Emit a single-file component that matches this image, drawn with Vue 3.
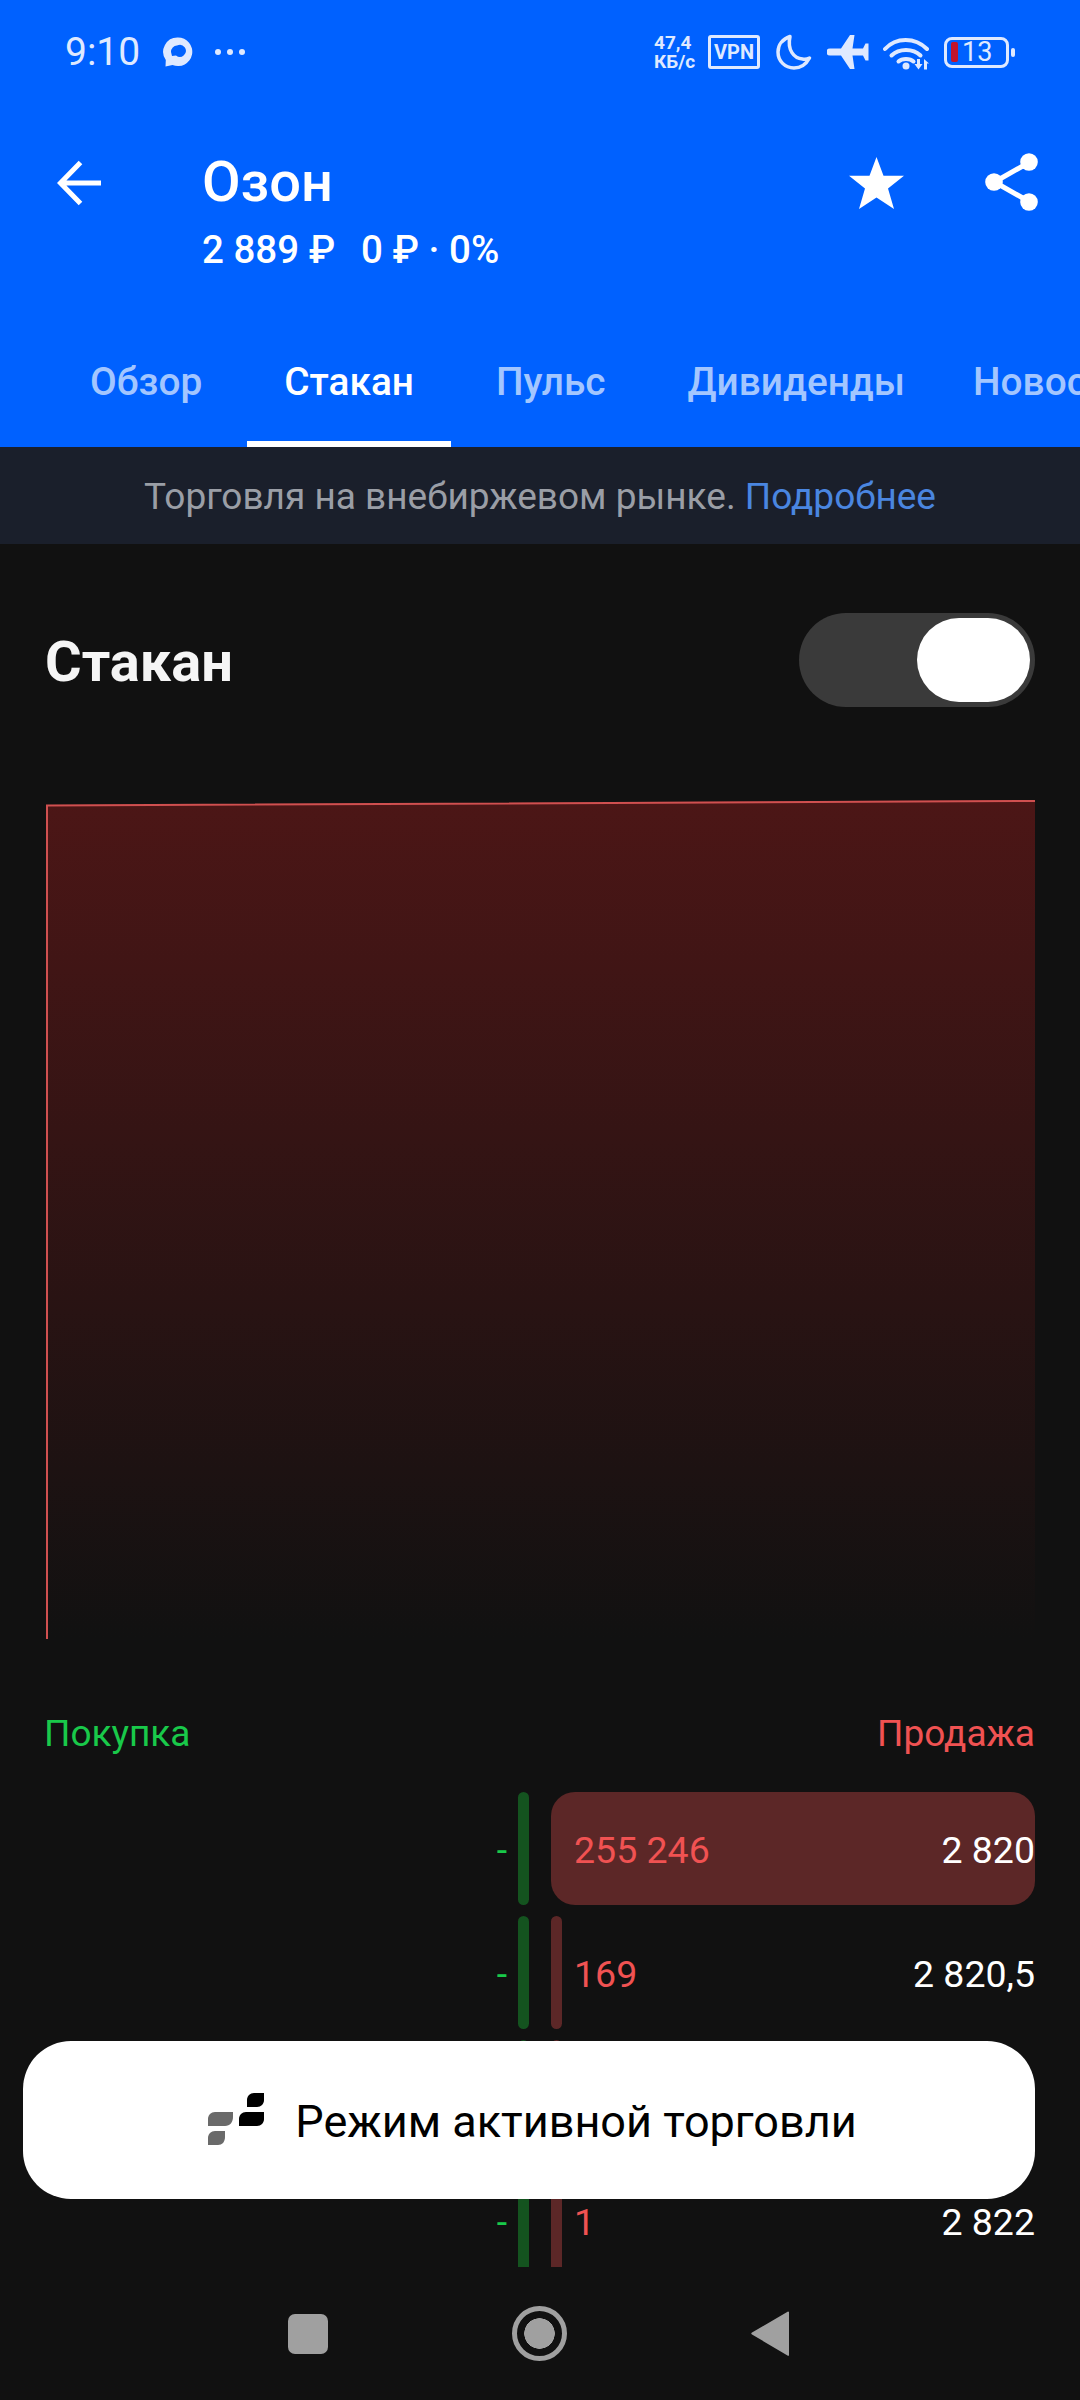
<template>
  <div class="screen">
    <div class="top">
      <div class="status">
        <span class="time">9:10</span>
        <svg class="bubble" width="30" height="30" viewBox="0 0 30 30">
          <path d="M15 0.5a14.300 14.300 0 1 1-5.500 27.500l-7 1.500 .3-6.500A14.300 14.300 0 0 1 15 0.5zM14 8.500a6.500 6.500 0 0 0-6 6.500l1 4 4-.5a6 6 0 1 0 1-10z" fill="#dfe9ff" fill-rule="evenodd" />
        </svg>
        <svg class="dots" width="32" height="8" viewBox="0 0 32 8">
          <circle cx="4" cy="4" r="3" fill="#dfe9ff" />
          <circle cx="16" cy="4" r="3" fill="#dfe9ff" />
          <circle cx="28" cy="4" r="3" fill="#dfe9ff" />
        </svg>
        <div class="status__right">
          <div class="speed">47,4<br />КБ/с</div>
          <div class="vpn">VPN</div>
          <svg class="moon" width="36" height="36" viewBox="0 0 36 36">
            <path d="M14 2.500C6.500 5 2 11 2 18c0 9 7 16 16 16 7 0 12-3.500 15.500-10-2 1-4.500 1.500-7 1C18 24.500 11 16 14 2.500z" fill="none" stroke="#dfe9ff" stroke-width="3.500" stroke-linejoin="round" />
          </svg>
          <svg class="plane" width="42" height="36" viewBox="0 0 42 36">
            <path d="M3 14.500H14L23 1H27.500L25.500 14.500H36L38.500 9.500H41.500V26.500H38.500L36 21.500H25.500L27.500 35H23L14 21.500H3A3.500 3.500 0 0 1 3 14.500z" fill="#dfe9ff" />
          </svg>
          <svg class="wifi" width="47" height="35" viewBox="0 0 47 35">
            <g fill="none" stroke="#dfe9ff" stroke-width="4" stroke-linecap="round">
              <path d="M2 14C13 2 32 2 44 14" />
              <path d="M8.500 20.500C16 13 30 13 37.500 20.500" />
              <path d="M15.500 26.500C19 23 27 23 30.500 26.500" />
            </g>
            <circle cx="23" cy="31" r="3.500" fill="#dfe9ff" />
            <path d="M34 24H37V29H39.500L35.500 34.500 31.500 29H34zM41 34.500V24L46 28.500H44V34.500z" fill="#dfe9ff" />
          </svg>
          <div class="battery">
            <div class="battery__body">
              <i class="battery__level"></i>
              <span>13</span>
            </div>
            <i class="battery__nub"></i>
          </div>
        </div>
      </div>

      <div class="head">
        <svg class="back" width="46" height="46" viewBox="0 0 46 46">
          <path d="M44 23H4M23.500 2.500L3.500 23l20 20.500" fill="none" stroke="#fff" stroke-width="5" />
        </svg>
        <div class="head__title">
          <h1>Озон</h1>
          <p>2 889 ₽<span class="change">0 ₽ · 0%</span></p>
        </div>
        <svg class="star" width="55" height="52" viewBox="0 0 55 52">
          <path d="M27.500 0L34.500 18.800H55L39 31.500 45 52 27.500 40.500 10 52 16 31.500 0 18.800H20.500z" fill="#fff" />
        </svg>
        <svg class="share" width="54" height="58" viewBox="0 0 54 58">
          <path d="M44 9.500L9.500 29l34.500 19.500" fill="none" stroke="#fff" stroke-width="5" />
          <circle cx="44" cy="9" r="8.800" fill="#fff" />
          <circle cx="9" cy="29" r="8.800" fill="#fff" />
          <circle cx="44" cy="49" r="8.800" fill="#fff" />
        </svg>
      </div>

      <div class="tabs">
        <div v-for="tab in tabs" :key="tab" class="tab" :class="{ active: tab === 'Стакан' }">{{ tab }}</div>
      </div>
    </div>

    <div class="notice">Торговля на внебиржевом рынке. <a>Подробнее</a></div>

    <div class="book">
      <div class="book__head">
        <h2>Стакан</h2>
        <div class="toggle"><i></i></div>
      </div>

      <svg class="chart" width="989" height="839" viewBox="0 0 989 839">
        <defs>
          <linearGradient id="depth" x1="0" y1="0" x2="0" y2="1">
            <stop offset="0" stop-color="#4c1616" />
            <stop offset="1" stop-color="#111111" />
          </linearGradient>
        </defs>
        <path d="M0 5L989 0V839H0z" fill="url(#depth)" />
        <path d="M1 839V5.500L989 1" fill="none" stroke="#d05050" stroke-width="2" />
      </svg>

      <div class="sides">
        <span class="buy-label">Покупка</span>
        <span class="sell-label">Продажа</span>
      </div>

      <div class="rows">
        <div v-for="(row, i) in rows" :key="i" class="row">
          <div class="buy">
            <span>{{ row.price ? '-' : '' }}</span>
            <i></i>
          </div>
          <div class="sell">
            <i :class="{ wide: row.depth === '100%' }" :style="{ width: row.depth }"></i>
            <span class="qty">{{ row.qty }}</span>
            <span class="price">{{ row.price }}</span>
          </div>
        </div>
      </div>
    </div>

    <div class="navbar">
      <i class="nav-square"></i>
      <i class="nav-circle"></i>
      <svg width="38" height="47" viewBox="0 0 38 47">
        <path d="M37 1.500A1 1 0 0 1 38 3V44A1 1 0 0 1 36.500 45.500L1 24.500A1.200 1.200 0 0 1 1 22.500z" fill="#a0a0a0" />
      </svg>
    </div>

    <div class="active-mode">
      <svg width="58" height="54" viewBox="0 0 58 54">
        <path d="M47 0H57V7C57 11 54 14 50 14H40V7C40 3 43 0 47 0z" fill="#000" />
        <path d="M39 19H57V26C57 30 54 33 50 33H32V26C32 22 35 19 39 19z" fill="#000" />
        <path d="M8 19H26V24C26 29 23 33 18 33H1V26C1 22 4 19 8 19z" fill="#6a6a6a" />
        <path d="M8 38H18V44C18 49 15 52 11 52H1V45C1 41 4 38 8 38z" fill="#6a6a6a" />
      </svg>
      <span>Режим активной торговли</span>
    </div>
  </div>
</template>

<script setup>
const tabs = ['Обзор', 'Стакан', 'Пульс', 'Дивиденды', 'Новости']

// третья строка целиком закрыта кнопкой, видны только верхушки полос
const rows = [
  { qty: '255 246', price: '2 820', depth: '100%' },
  { qty: '169', price: '2 820,5', depth: '11px' },
  { qty: '', price: '', depth: '11px' },
  { qty: '1', price: '2 822', depth: '11px' },
]
</script>

<style scoped>
.screen {
  position: relative;
  width: 1080px;
  height: 2400px;
  overflow: hidden;
  display: flex;
  flex-direction: column;
  background: #111111;
  color: #fff;
  font-family: Roboto, "Noto Sans", sans-serif;
}

.top {
  background: #0061ff;
}

.status {
  height: 104px;
  display: flex;
  align-items: center;
  padding-left: 65px;
  color: #dfe9ff;
}

.time {
  font-size: 39px;
  width: 98px;
}

.bubble {
  margin-right: 21px;
}

.status__right {
  margin-left: auto;
  display: flex;
  align-items: center;
  padding-right: 65px;
}

.speed {
  width: 54px;
  font-size: 19px;
  font-weight: 700;
  line-height: 19px;
}

.vpn {
  width: 52px;
  height: 34px;
  box-sizing: border-box;
  border: 3px solid #dfe9ff;
  border-radius: 3px;
  font-size: 20px;
  font-weight: 700;
  line-height: 28px;
  text-align: center;
}

.moon {
  margin-left: 16px;
}

.plane {
  margin-left: 15px;
}

.wifi {
  margin-left: 14px;
}

.battery {
  margin-left: 14px;
  display: flex;
  align-items: center;
}

.battery__body {
  width: 65px;
  height: 31px;
  box-sizing: border-box;
  border: 3px solid #dfe9ff;
  border-radius: 8px;
  display: flex;
  align-items: center;
  padding-left: 4px;
  font-size: 27px;
}

.battery__level {
  width: 7px;
  height: 20px;
  border-radius: 2px;
  background: #c2142c;
  margin-right: 4px;
}

.battery__nub {
  width: 4px;
  height: 9px;
  margin-left: 2px;
  border-radius: 2px;
  background: #dfe9ff;
}

.head {
  height: 211px;
  box-sizing: border-box;
  padding: 44px 41px 0 57px;
  display: flex;
  align-items: flex-start;
}

.back {
  margin-top: 12px;
}

.head__title {
  margin-left: 99px;
  flex: 1;
}

h1 {
  margin: 0;
  font-size: 56px;
  font-weight: 500;
  line-height: 68px;
}

.head__title p {
  margin: 12px 0 0;
  font-size: 38.500px;
  font-weight: 500;
  line-height: 44px;
}

.change {
  margin-left: 26px;
}

.star {
  margin-top: 9px;
}

.share {
  margin: 5px 0 0 81px;
}

.tabs {
  height: 132px;
  padding-left: 53px;
  display: flex;
  gap: 8px;
  overflow: hidden;
}

.tab {
  box-sizing: border-box;
  padding: 0 37px;
  border-top: 6px solid transparent;
  border-bottom: 6px solid transparent;
  display: flex;
  align-items: center;
  font-size: 38.800px;
  font-weight: 500;
  color: #a3c6ff;
  white-space: nowrap;
}

.tab:last-child {
  padding-left: 23px;
}

.tab.active {
  color: #fff;
  border-bottom-color: #fff;
}

.notice {
  height: 97px;
  box-sizing: border-box;
  padding-top: 3px;
  background: #1a1f2b;
  color: #9a9ea6;
  font-size: 37px;
  line-height: 94px;
  text-align: center;
}

.notice a {
  color: #4a86e0;
}

.book {
  flex: 1;
  min-height: 0;
  display: flex;
  flex-direction: column;
  padding: 69px 45px 0 46px;
}

.book__head {
  display: flex;
  align-items: center;
  justify-content: space-between;
}

h2 {
  margin: 0 0 0 -1px;
  padding-top: 4px;
  font-size: 56px;
  font-weight: 700;
  color: #f5f5f5;
}

.toggle {
  width: 236px;
  height: 94px;
  box-sizing: border-box;
  padding: 5px;
  border-radius: 47px;
  background: #3a3a3a;
  display: flex;
  justify-content: flex-end;
}

.toggle i {
  width: 113px;
  height: 84px;
  border-radius: 42px;
  background: #fff;
}

.chart {
  display: block;
  flex: none;
  margin-top: 93px;
}

.sides {
  height: 44px;
  box-sizing: border-box;
  padding-top: 2px;
  margin: 72px 0 37px;
  display: flex;
  justify-content: space-between;
  font-size: 37px;
  line-height: 42px;
}

.buy-label {
  margin-left: -2px;
  color: #19c94a;
}

.sell-label {
  color: #f05252;
}

.rows {
  flex: 1;
  min-height: 0;
  overflow: hidden;
  display: flex;
  flex-direction: column;
  gap: 11px;
}

.row {
  flex: none;
  height: 113px;
  display: flex;
  gap: 22px;
  font-size: 37.500px;
}

.buy {
  width: 483px;
  display: flex;
  justify-content: flex-end;
  align-items: center;
  gap: 11px;
  color: #19c94a;
}

.buy span {
  padding-top: 3px;
}

.buy i {
  width: 11px;
  height: 100%;
  border-radius: 6px;
  background: #14531f;
}

.sell {
  position: relative;
  flex: 1;
  display: flex;
  justify-content: space-between;
  align-items: center;
  padding: 3px 0 0 23px;
  box-sizing: border-box;
}

.sell i {
  position: absolute;
  left: 0;
  top: 0;
  bottom: 0;
  border-radius: 6px;
  background: #5c2727;
}

.sell i.wide {
  border-radius: 24px;
}

.qty {
  position: relative;
  color: #f05252;
}

.price {
  position: relative;
  color: #fff;
}

.navbar {
  height: 133px;
  flex: none;
  display: flex;
  align-items: center;
  justify-content: center;
  gap: 184px;
  padding-right: 3px;
}

.nav-square {
  width: 40px;
  height: 40px;
  border-radius: 7px;
  background: #a0a0a0;
}

.nav-circle {
  width: 55px;
  height: 55px;
  box-sizing: border-box;
  border: 5px solid #a0a0a0;
  border-radius: 50%;
  background: radial-gradient(circle, #a0a0a0 0 15px, transparent 15.500px);
}

.active-mode {
  position: absolute;
  left: 23px;
  top: 2041px;
  width: 1012px;
  height: 158px;
  box-sizing: border-box;
  padding: 2px 0 0 6px;
  border-radius: 48px;
  background: #fff;
  color: #000;
  display: flex;
  align-items: center;
  justify-content: center;
  gap: 30px;
  font-size: 45px;
}

.active-mode svg {
  margin-top: -2px;
}
</style>
